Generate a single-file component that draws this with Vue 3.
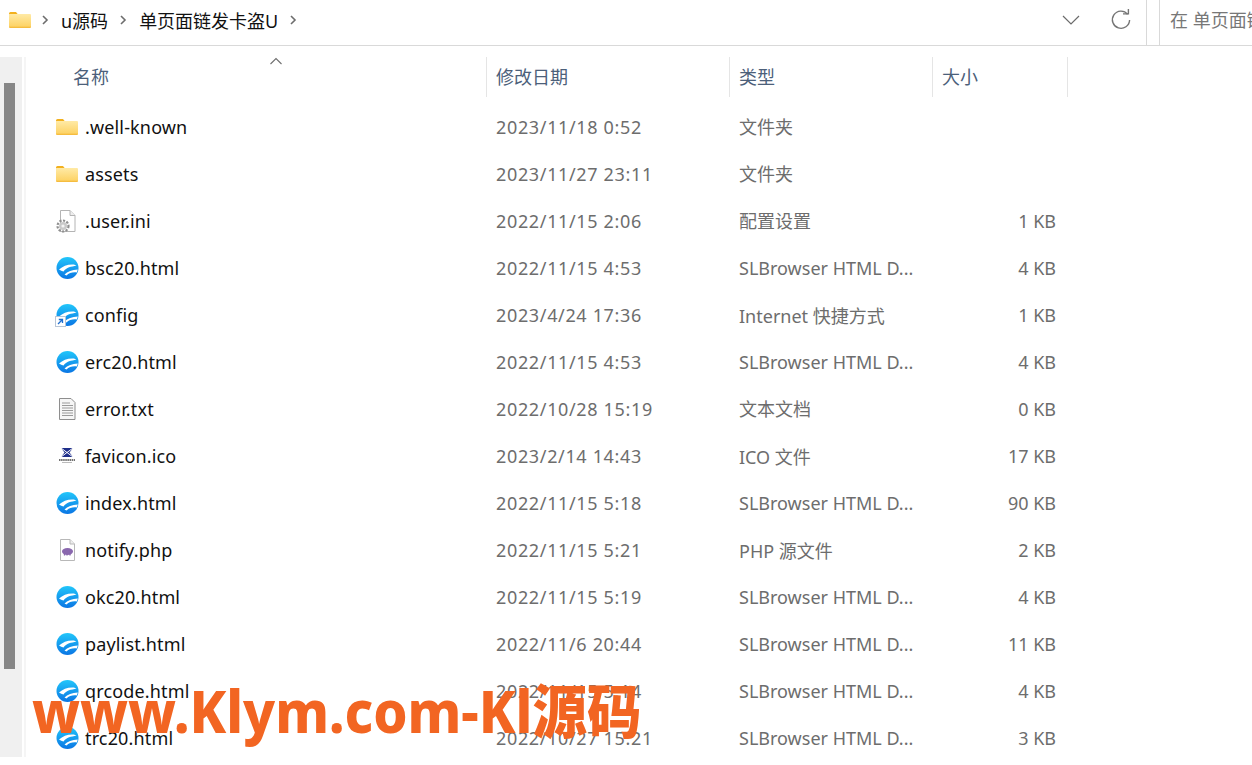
<script setup>
const rows = [
  { name: '.well-known', icon: 'folder', date: '2023/11/18 0:52', type: '文件夹', size: '' },
  { name: 'assets', icon: 'folder', date: '2023/11/27 23:11', type: '文件夹', size: '' },
  { name: '.user.ini', icon: 'ini', date: '2022/11/15 2:06', type: '配置设置', size: '1 KB' },
  { name: 'bsc20.html', icon: 'browser', date: '2022/11/15 4:53', type: 'SLBrowser HTML D...', size: '4 KB' },
  { name: 'config', icon: 'link', date: '2023/4/24 17:36', type: 'Internet 快捷方式', size: '1 KB' },
  { name: 'erc20.html', icon: 'browser', date: '2022/11/15 4:53', type: 'SLBrowser HTML D...', size: '4 KB' },
  { name: 'error.txt', icon: 'txt', date: '2022/10/28 15:19', type: '文本文档', size: '0 KB' },
  { name: 'favicon.ico', icon: 'ico', date: '2023/2/14 14:43', type: 'ICO 文件', size: '17 KB' },
  { name: 'index.html', icon: 'browser', date: '2022/11/15 5:18', type: 'SLBrowser HTML D...', size: '90 KB' },
  { name: 'notify.php', icon: 'php', date: '2022/11/15 5:21', type: 'PHP 源文件', size: '2 KB' },
  { name: 'okc20.html', icon: 'browser', date: '2022/11/15 5:19', type: 'SLBrowser HTML D...', size: '4 KB' },
  { name: 'paylist.html', icon: 'browser', date: '2022/11/6 20:44', type: 'SLBrowser HTML D...', size: '11 KB' },
  { name: 'qrcode.html', icon: 'browser', date: '2022/11/15 5:14', type: 'SLBrowser HTML D...', size: '4 KB' },
  { name: 'trc20.html', icon: 'browser', date: '2022/10/27 15:21', type: 'SLBrowser HTML D...', size: '3 KB' }
]

function isCjk(text) {
  return /^[^\x00-\x7f]+$/.test(text)
}
</script>

<template>
  <div class="window">
    <header class="toolbar">
      <div class="address">
        <svg class="crumb-folder" width="24" height="20" viewBox="0 0 24 20">
          <path d="M1 3.500Q1 2 2.500 2H8l2 2.500H1z" fill="#f2b01e" />
          <rect x="1" y="4" width="22" height="14" rx="1" fill="url(#folderFill)" />
          <defs>
            <linearGradient id="folderFill" x1="0" y1="0" x2="0" y2="1">
              <stop offset="0" stop-color="#ffeaa6" />
              <stop offset="0.85" stop-color="#fdd469" />
              <stop offset="1" stop-color="#f3b532" />
            </linearGradient>
            <linearGradient id="browserFill" x1="0" y1="0" x2="0" y2="1">
              <stop offset="0" stop-color="#22c6fa" />
              <stop offset="1" stop-color="#0a76e4" />
            </linearGradient>
          </defs>
        </svg>
        <svg class="chev" width="8" height="10" viewBox="0 0 8 10"><path d="M2 1l4 4-4 4" fill="none" stroke="#6d6d6d" stroke-width="1.6" /></svg>
        <span class="crumb">u源码</span>
        <svg class="chev" width="8" height="10" viewBox="0 0 8 10"><path d="M2 1l4 4-4 4" fill="none" stroke="#6d6d6d" stroke-width="1.6" /></svg>
        <span class="crumb">单页面链发卡盗U</span>
        <svg class="chev" width="8" height="10" viewBox="0 0 8 10"><path d="M2 1l4 4-4 4" fill="none" stroke="#6d6d6d" stroke-width="1.6" /></svg>
        <svg class="drop" width="18" height="10" viewBox="0 0 18 10"><path d="M1 1l8 8 8-8" fill="none" stroke="#6b6b6b" stroke-width="1.2" /></svg>
        <svg class="refresh" width="22" height="22" viewBox="0 0 22 22">
          <path d="M17.600 5.200A8.600 8.600 0 1 0 19.600 11" fill="none" stroke="#757575" stroke-width="1.4" />
          <path d="M13 4.900h5.400V0" fill="none" stroke="#757575" stroke-width="1.4" />
        </svg>
      </div>
      <div class="search">在 单页面链发卡盗U 中搜索</div>
    </header>

    <div class="body">
      <div class="side"><div class="thumb"></div></div>
      <main class="list">
        <div class="head">
          <div class="hcell hname">名称</div>
          <div class="hcell">修改日期</div>
          <div class="hcell">类型</div>
          <div class="hcell">大小</div>
          <svg class="sort" width="14" height="8" viewBox="0 0 14 8"><path d="M1.500 7l5.500-5.500L12.500 7" fill="none" stroke="#6f6f6f" stroke-width="1.1" /></svg>
        </div>
        <div v-for="r in rows" :key="r.name" class="row">
          <div class="name">
            <span class="icon">
              <svg v-if="r.icon === 'folder'" width="24" height="20" viewBox="0 0 24 20">
                <path d="M1 3.500Q1 2 2.500 2H8l2 2.500H1z" fill="#f2b01e" />
                <rect x="1" y="4" width="22" height="14" rx="1" fill="url(#folderFill)" />
              </svg>
              <svg v-else-if="r.icon === 'browser' || r.icon === 'link'" width="24" height="24" viewBox="0 0 24 24">
                <circle cx="12.500" cy="12" r="11" fill="url(#browserFill)" />
                <path d="M4 13.500C8 10 13 8 19 8.500L21.500 9.800C16 10.500 11.500 11.500 8.500 15.500C7 15 5.500 14.500 4 13.500z" fill="#fff" />
                <path d="M9.500 18.500C12.500 15.500 17 14 22.800 13.500L21.800 16.500C18 16 14 16.800 11.500 19.500z" fill="#fff" />
                <g v-if="r.icon === 'link'">
                  <rect x="0.500" y="13.500" width="10" height="10" fill="#fff" stroke="#b9c6d6" />
                  <path d="M3 21l4-4M3.800 16.500h3.700V20" fill="none" stroke="#1f6fd0" stroke-width="1.300" />
                </g>
              </svg>
              <svg v-else-if="r.icon === 'ini'" width="24" height="24" viewBox="0 0 24 24">
                <path d="M5.500 1.500H15l5 5v16H5.500z" fill="#fff" stroke="#b4b4b4" />
                <path d="M15 1.500v5h5" fill="#eee" stroke="#b4b4b4" />
                <circle cx="8" cy="17" r="5.500" fill="none" stroke="#8f8f8f" stroke-width="2.200" stroke-dasharray="2.200 1.400" />
                <circle cx="8" cy="17" r="4" fill="#c9c9c9" />
                <circle cx="8" cy="17" r="1.600" fill="#f4f4f4" />
              </svg>
              <svg v-else-if="r.icon === 'txt'" width="24" height="24" viewBox="0 0 24 24">
                <path d="M4.500 1.500H16l4 4v17H4.500z" fill="#f6f6f6" stroke="#8e8e8e" />
                <path d="M7 6h8M7 8.500h11M7 11h11M7 13.500h11M7 16h11M7 18.500h11" stroke="#9a9a9a" />
              </svg>
              <svg v-else-if="r.icon === 'ico'" width="24" height="24" viewBox="0 0 24 24">
                <path d="M6 4h12l-3.500 4.500L18 13H6l3.500-4.500z" fill="#1f2f8a" />
                <path d="M6 4l12 9M18 4L6 13" stroke="#fff" stroke-width="1" />
                <path d="M4 16h16" stroke="#444" stroke-width="1.500" stroke-dasharray="1.500 .6" />
                <path d="M7 18.500h10" stroke="#bbb" />
              </svg>
              <svg v-else width="24" height="24" viewBox="0 0 24 24">
                <path d="M5.500 1.500H15l4.500 4.500v16.500h-14z" fill="#fff" stroke="#b8b8b8" />
                <path d="M15 1.500V6h4.500" fill="#eee" stroke="#b8b8b8" />
                <ellipse cx="12.500" cy="13.500" rx="5.500" ry="3.400" fill="#8a68ae" />
                <path d="M9.500 15v2.500M12 15.500v2M15 15v2.500" stroke="#8a68ae" stroke-width="1.300" />
              </svg>
            </span>
            <span class="fname">{{ r.name }}</span>
          </div>
          <div class="cell date">{{ r.date }}</div>
          <div class="cell" :class="{ cjk: isCjk(r.type) }">{{ r.type }}</div>
          <div class="cell size">{{ r.size }}</div>
        </div>
      </main>
    </div>

    <div class="mark">www.Klym.com-Kl源码</div>
  </div>
</template>

<style scoped>
.window {
  position: relative;
  width: 1252px;
  height: 765px;
  overflow: hidden;
  background: #fff;
  font-family: "Noto Sans", "Noto Sans CJK SC", sans-serif;
  font-size: 18px;
  color: #111;
}

.toolbar {
  display: flex;
  height: 46px;
  box-sizing: border-box;
  border-bottom: 1px solid #d9d9d9;
}

.address {
  display: flex;
  align-items: center;
  width: 1147px;
  height: 46px;
  flex-shrink: 0;
  box-sizing: border-box;
  border-right: 1px solid #d9d9d9;
  padding: 0 0 6px 8px;
}

.crumb-folder { margin-right: 9px; }
.chev { margin: 0 12px 0 0; }
.crumb { margin-right: 11px; }
.drop { margin-left: auto; }
.refresh { margin: 0 14px 0 30px; }

.search {
  margin-left: 12px;
  flex: 1;
  border-left: 1px solid #d9d9d9;
  padding-left: 10px;
  line-height: 41px;
  color: #777;
  white-space: nowrap;
  overflow: hidden;
}

.body {
  display: flex;
  margin-top: 11px;
  height: 700px;
}

.side {
  width: 22px;
  flex-shrink: 0;
  background: #f0f0f0;
  padding: 26px 0 0 4px;
  box-sizing: border-box;
}

.thumb {
  width: 11px;
  height: 586px;
  background: #868686;
}

.list {
  flex: 1;
  border-left: 2px solid #f5f5f5;
  margin-left: 2px;
}

.head {
  position: relative;
  display: grid;
  grid-template-columns: 461px 243px 203px 135px;
  height: 40px;
  margin-bottom: 6px;
}

.hcell {
  border-right: 1px solid #e5e5e5;
  padding-left: 9px;
  line-height: 40px;
  color: #4c607a;
}

.hname { padding-left: 47px; }

.sort {
  position: absolute;
  left: 243px;
  top: 0;
}

.row {
  display: grid;
  grid-template-columns: 461px 243px 203px 135px;
  height: 47px;
  align-items: center;
}

.name {
  display: flex;
  align-items: center;
  padding-left: 29px;
}

.icon {
  display: flex;
  width: 24px;
  height: 24px;
  align-items: center;
  margin-right: 6px;
}

.fname {
  color: #111;
  letter-spacing: 0.15px;
}

.cell {
  padding-left: 9px;
  color: #6d6d6d;
}

.cjk { padding-bottom: 2px; }
.date { letter-spacing: 0.65px; }

.size {
  padding: 0 12px 0 0;
  text-align: right;
}

.mark {
  position: absolute;
  left: 32px;
  top: 669px;
  font-size: 58px;
  font-weight: 800;
  line-height: 84px;
  color: #f26522;
  white-space: nowrap;
  transform: scaleX(0.94);
  transform-origin: left center;
}
</style>
